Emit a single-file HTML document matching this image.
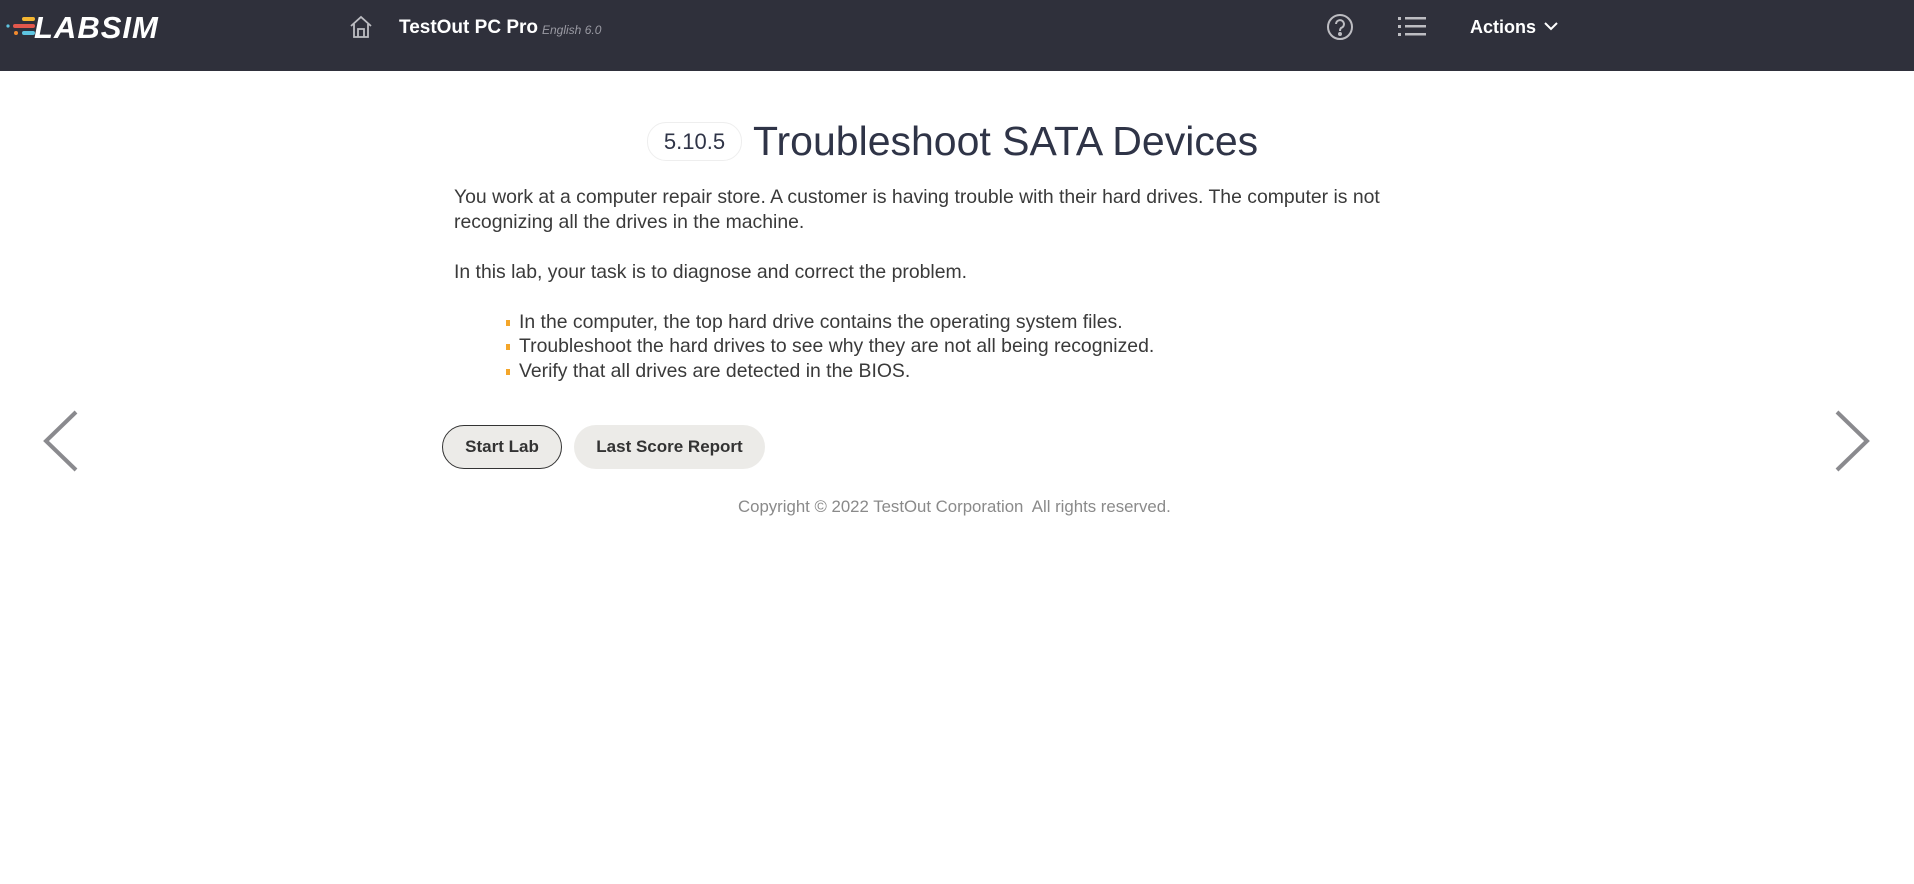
<!DOCTYPE html>
<html><head><meta charset="utf-8"><style>
body{margin:0;width:1914px;height:884px;background:#fff;font-family:"Liberation Sans",sans-serif;position:relative;overflow:hidden}
.hdr{position:absolute;left:0;top:0;width:1914px;height:71px;background:#2f303b}
.a{position:absolute;white-space:nowrap}
.p{color:#3a3a3a;font-size:19.4px}
.btn{position:absolute;top:425px;height:44px;border-radius:22px;background:#ecebe8;font-weight:bold;font-size:17px;color:#333;display:flex;align-items:center;justify-content:center;box-sizing:border-box}
.dot{display:inline-block;width:4px;height:6px;background:#f4a62a;position:absolute;left:-13px;top:9px}
</style></head><body>
<div class="hdr">
<svg class="a" style="left:5px;top:12px" width="32" height="30"><rect x="17" y="5" width="13" height="4" rx="2" fill="#f5b631"/><rect x="8" y="12" width="22" height="4" rx="2" fill="#e2574c"/><rect x="17" y="19" width="13" height="4" rx="2" fill="#5ec4e0"/><circle cx="11" cy="21" r="2" fill="#f28a2e"/><circle cx="3" cy="14" r="1.6" fill="#5ec4e0"/></svg>
<div class="a" style="left:34px;top:10px;font-size:31px;font-weight:bold;font-style:italic;color:#fff;letter-spacing:1px">LABSIM</div>
<svg class="a" style="left:349px;top:15px" width="24" height="24" fill="none" stroke="#bdbdc2" stroke-width="1.8"><path d="M2 11 L12 2 L22 11 M5 9 V22 H19 V9 M9 22 V14 H15 V22"/></svg>
<div class="a" style="left:399px;top:17px;font-size:19px;font-weight:bold;color:#fff">TestOut PC Pro</div>
<div class="a" style="left:542px;top:23px;font-size:12px;font-style:italic;color:#9a9aa3">English 6.0</div>
<svg class="a" style="left:1326px;top:13px" width="28" height="28" fill="none" stroke="#bdbdc2" stroke-width="2"><circle cx="14" cy="14" r="12"/><path d="M10 11 a4 4 0 1 1 5 4 q-1 1 -1 3"/><circle cx="14" cy="21" r="1" fill="#bdbdc2"/></svg>
<svg class="a" style="left:1398px;top:16px" width="28" height="22" fill="#bdbdc2"><rect x="0" y="1" width="3" height="3"/><rect x="7" y="1" width="21" height="2.5"/><rect x="0" y="9" width="3" height="3"/><rect x="7" y="9" width="21" height="2.5"/><rect x="0" y="17" width="3" height="3"/><rect x="7" y="17" width="21" height="2.5"/></svg>
<div class="a" style="left:1470px;top:17px;font-size:18px;font-weight:bold;color:#fff">Actions</div>
<svg class="a" style="left:1543px;top:21px" width="16" height="10" fill="none" stroke="#fff" stroke-width="2"><path d="M2 2 L8 8 L14 2"/></svg>
</div>
<div class="a" style="left:647px;top:122px;width:93px;height:37px;border:1px solid #eee;border-radius:19px;font-size:22px;color:#2f3447;display:flex;align-items:center;justify-content:center">5.10.5</div>
<div class="a" style="left:753px;top:118px;font-size:41px;color:#2f3447">Troubleshoot SATA Devices</div>
<div class="a p" style="left:454px;top:186px">You work at a computer repair store. A customer is having trouble with their hard drives. The computer is not</div>
<div class="a p" style="left:454px;top:211px">recognizing all the drives in the machine.</div>
<div class="a p" style="left:454px;top:261px">In this lab, your task is to diagnose and correct the problem.</div>
<div class="a p" style="left:519px;top:311px"><span class="dot"></span>In the computer, the top hard drive contains the operating system files.</div>
<div class="a p" style="left:519px;top:335px"><span class="dot"></span>Troubleshoot the hard drives to see why they are not all being recognized.</div>
<div class="a p" style="left:519px;top:360px"><span class="dot"></span>Verify that all drives are detected in the BIOS.</div>
<div class="btn" style="left:442px;width:120px;border:1px solid #333">Start Lab</div>
<div class="btn" style="left:574px;width:191px">Last Score Report</div>
<div class="a" style="left:738px;top:497px;font-size:16.8px;color:#8a8a8a">Copyright © 2022 TestOut Corporation&nbsp; All rights reserved.</div>
<svg class="a" style="left:40px;top:408px" width="40" height="66" fill="none" stroke="#8a8a8e" stroke-width="4"><path d="M36 4 L6 33 L36 62"/></svg>
<svg class="a" style="left:1833px;top:408px" width="40" height="66" fill="none" stroke="#8a8a8e" stroke-width="4"><path d="M4 4 L34 33 L4 62"/></svg>
</body></html>
